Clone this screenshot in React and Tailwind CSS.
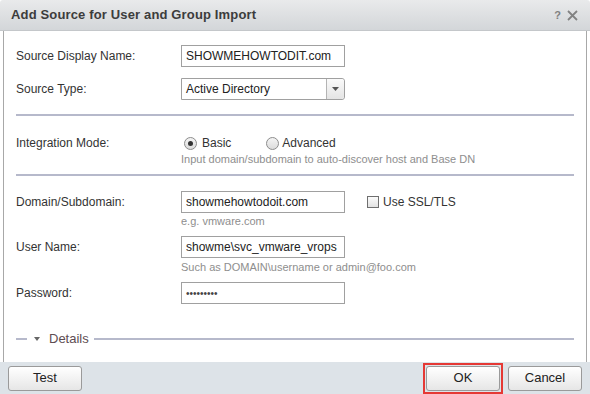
import React from 'react'

const font = { fontFamily: '"Liberation Sans", Arial, sans-serif' }

function Field({ value, className = '' }) {
  return (
    <div className={`h-[22px] w-[164px] border border-[#a0a0a0] bg-white px-[4px] flex items-center text-[12px] text-[#222] ${className}`}>
      {value}
    </div>
  )
}

function Radio({ checked }) {
  return (
    <span className="w-[13px] h-[13px] rounded-full border border-[#8c8c8c] bg-gradient-to-b from-[#f4f4f4] to-[#dcdcdc] flex items-center justify-center">
      {checked && <span className="w-[5px] h-[5px] rounded-full bg-[#333]" />}
    </span>
  )
}

function Btn({ children, className = '' }) {
  return (
    <button className={`h-[25px] w-[74px] rounded-[3px] border border-[#9a9a9a] bg-gradient-to-b from-[#ffffff] to-[#e6e6e6] text-[13px] text-[#222] ${className}`}>
      {children}
    </button>
  )
}

export default function App() {
  return (
    <div className="w-[590px] h-[394px] bg-white flex flex-col overflow-hidden" style={font}>
      {/* Title bar */}
      <div className="h-[31px] shrink-0 flex items-center justify-between pl-[11px] pr-[12px] bg-gradient-to-b from-[#e9eaeb] to-[#d3d6d9] border-b border-[#c4c7ca] rounded-t-[3px]">
        <span className="text-[13px] font-bold text-[#3c3c3c] tracking-[0.15px]">Add Source for User and Group Import</span>
        <div className="flex items-center gap-[6px] text-[#808080]">
          <span className="text-[11px] font-bold">?</span>
          <svg width="11" height="11" viewBox="0 0 11 11">
            <path d="M1 1 L10 10 M10 1 L1 10" stroke="#828282" strokeWidth="1.8" />
          </svg>
        </div>
      </div>

      {/* Body */}
      <div className="flex-1 mx-[3px] border-x border-[#a8a8a8] flex flex-col px-[12px] text-[12px] text-[#333]">
        <div className="flex items-center mt-[14px]">
          <span className="w-[165px]">Source Display Name:</span>
          <Field value="SHOWMEHOWTODIT.com" />
        </div>
        <div className="flex items-center mt-[11px]">
          <span className="w-[165px]">Source Type:</span>
          <div className="h-[22px] w-[164px] border border-[#a0a0a0] rounded-r-[3px] flex bg-white">
            <span className="flex-1 px-[4px] flex items-center text-[#222]">Active Directory</span>
            <span className="w-[18px] border-l border-[#b4b4b4] bg-gradient-to-b from-[#fafafa] to-[#e4e4e4] rounded-r-[3px] flex items-center justify-center">
              <svg width="7" height="4" viewBox="0 0 7 4"><path d="M0 0 H7 L3.5 4 Z" fill="#555" /></svg>
            </span>
          </div>
        </div>

        <div className="h-[2px] bg-[#b6b9cb] mt-[14px]" />

        <div className="flex mt-[19px]">
          <span className="w-[165px] h-[16px] flex items-center">Integration Mode:</span>
          <div className="flex flex-col">
            <div className="h-[16px] flex items-center">
              <span className="ml-[3px]"><Radio checked /></span>
              <span className="ml-[5px]">Basic</span>
              <span className="ml-[35px]"><Radio /></span>
              <span className="ml-[3px]">Advanced</span>
            </div>
            <span className="text-[11px] text-[#8e8e8e] mt-[1px] leading-[14px]">Input domain/subdomain to auto-discover host and Base DN</span>
          </div>
        </div>

        <div className="h-[2px] bg-[#b6b9cb] mt-[8px]" />

        <div className="flex items-center mt-[15px]">
          <span className="w-[165px]">Domain/Subdomain:</span>
          <Field value="showmehowtodoit.com" />
          <span className="ml-[22px] w-[12px] h-[12px] border border-[#6f6f6f] bg-gradient-to-b from-[#fbfbfb] to-[#e2e2e2]" />
          <span className="ml-[4px]">Use SSL/TLS</span>
        </div>
        <div className="pl-[165px] text-[11px] text-[#8e8e8e] mt-[1px] leading-[14px]">e.g. vmware.com</div>

        <div className="flex items-center mt-[8px]">
          <span className="w-[165px]">User Name:</span>
          <Field value="showme\svc_vmware_vrops" />
        </div>
        <div className="pl-[165px] text-[11px] text-[#8e8e8e] mt-[2px] leading-[14px]">Such as DOMAIN\username or admin@foo.com</div>

        <div className="flex items-center mt-[8px]">
          <span className="w-[165px]">Password:</span>
          <Field value={<span className="text-[10px] text-[#444]">•••••••••</span>} />
        </div>

        <div className="flex items-center mt-[25px]">
          <span className="w-[11px] h-[2px] bg-[#b6b9cb]" />
          <svg className="ml-[7px]" width="6" height="4" viewBox="0 0 6 4"><path d="M0 0 H6 L3 4 Z" fill="#666" /></svg>
          <span className="ml-[9px] text-[13px] text-[#5e4d52]">Details</span>
          <span className="ml-[5px] flex-1 h-[2px] bg-[#b6b9cb]" />
        </div>
      </div>

      {/* Footer */}
      <div className="h-[32px] shrink-0 bg-[#dde3e8] flex items-center pl-[8px] pr-[8px]">
        <Btn>Test</Btn>
        <div className="ml-auto border-2 border-[#e53935] p-[1px] flex">
          <Btn className="w-[71px]">OK</Btn>
        </div>
        <Btn className="ml-[5px]">Cancel</Btn>
      </div>
    </div>
  )
}
